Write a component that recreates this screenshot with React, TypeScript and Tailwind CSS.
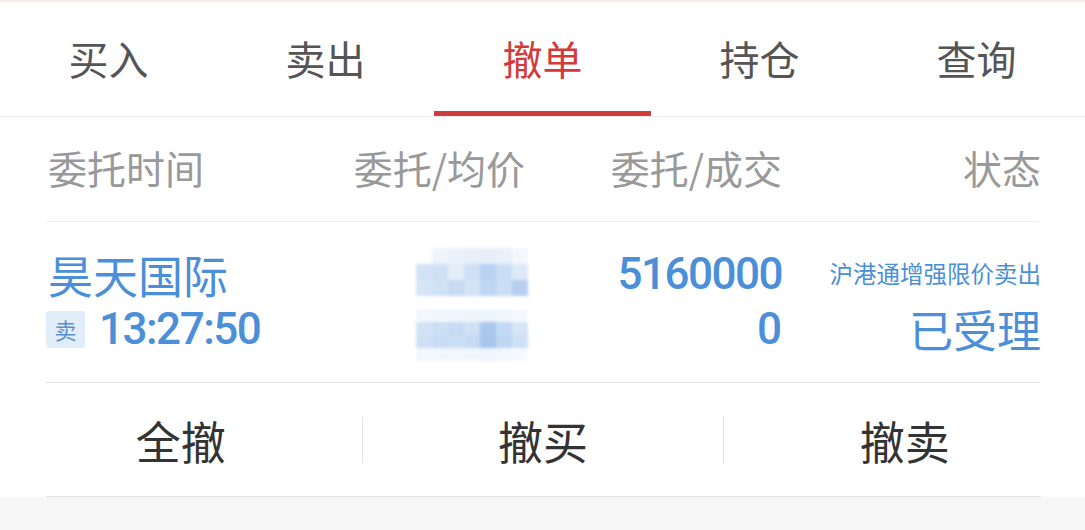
const tabs = ["买入", "卖出", "撤单", "持仓", "查询"];

const blue = "text-[#4a8fd8]";

// mosaic (pixelated price) cells
const mosaicTop = [
  ["#ffffff", "#eef4fb", "#eaf1fa", "#e8f0fa", "#e6eff9", "#e9f1fa", "#f4f8fc"],
  ["#d3e3f6", "#cfe0f5", "#e4eefa", "#cde0f5", "#b9d3f1", "#c9ddf4", "#dde9f8"],
  ["#d6e5f6", "#d0e1f5", "#c7dbf3", "#d2e3f6", "#bed6f2", "#cadef4", "#b7d0ef"],
];
const mosaicBottom = [
  ["#f2f7fc", "#f1f6fc", "#f0f6fc", "#eff5fb", "#eef5fb", "#f0f6fc", "#f5f9fd"],
  ["#d2e3f6", "#cbdff5", "#c7dcf4", "#cfe1f5", "#a9c8ec", "#c3d9f3", "#d5e5f7"],
  ["#cfe0f5", "#c8dcf3", "#cadef4", "#c6dbf3", "#a6c6ec", "#bfd6f2", "#cde0f5"],
  ["#f3f8fd", "#f0f6fc", "#f2f7fc", "#f1f6fc", "#eef5fc", "#f2f7fc", "#f6f9fd"],
];

function Mosaic({ rows, cell }: { rows: string[][]; cell: string }) {
  return (
    <div className="flex flex-col">
      {rows.map((r, i) => (
        <div key={i} className="flex">
          {r.map((c, j) => (
            <div key={j} className={`w-[16px] ${cell}`} style={{ backgroundColor: c }} />
          ))}
        </div>
      ))}
    </div>
  );
}

export default function App() {
  return (
    <div className="w-[1085px] h-[530px] bg-[#f7f7f7] overflow-hidden font-['Noto_Sans_CJK_SC',sans-serif]">
      <div className="bg-white border-t-2 border-[#fbecec]">
        {/* tabs */}
        <nav className="flex h-[115px] border-b border-[#ececec]">
          {tabs.map((t, i) => (
            <div key={t} className="relative flex-1 flex items-center justify-center">
              <span
                className={
                  i === 2
                    ? "text-[40px] leading-none text-[#d13b3b] -mt-[2px]"
                    : "text-[40px] leading-none text-[#555555] -mt-[2px]"
                }
              >
                {t}
              </span>
              {i === 2 && <div className="absolute left-0 right-0 bottom-0 h-[5px] bg-[#d13b3b]" />}
            </div>
          ))}
        </nav>

        {/* header */}
        <div className="mx-[46px] h-[105px] grid grid-cols-[254px_225px_257px_259px] items-center border-b border-[#ececec] text-[39px] leading-none text-[#999999]">
          <div className="pl-[2px] -mt-[3px]">委托时间</div>
          <div className="text-right -mt-[3px]">委托/均价</div>
          <div className="text-right -mt-[3px]">委托/成交</div>
          <div className="text-right -mt-[3px]">状态</div>
        </div>

        {/* order row */}
        <div className="mx-[46px] h-[161px] grid grid-cols-[254px_225px_257px_259px] border-b border-[#e3e3e3] pt-[29px]">
          <div className="flex flex-col gap-[9px]">
            <div className={`h-[46px] flex items-center text-[45px] leading-none pl-[2px] ${blue}`}>昊天国际</div>
            <div className="h-[46px] flex items-center gap-[14px]">
              <span className="w-[39px] h-[37px] rounded-[3px] bg-[#e2edfa] text-[#5b8fd0] text-[22px] leading-none flex items-center justify-center">
                卖
              </span>
              <span className={`font-['Roboto',sans-serif] font-medium text-[44px] tracking-[-1.5px] leading-none ${blue}`}>
                13:27:50
              </span>
            </div>
          </div>
          <div className="flex flex-col items-end -mr-[3px] -mt-[3px] blur-[1.5px]">
            <Mosaic rows={mosaicTop} cell="h-[16px]" />
            <div className="h-[13px]" />
            <Mosaic rows={mosaicBottom} cell="h-[13px]" />
          </div>
          <div className="flex flex-col gap-[9px] items-end font-['Roboto',sans-serif] font-medium">
            <div className={`h-[46px] flex items-center text-[44px] tracking-[-1.5px] leading-none ${blue}`}>5160000</div>
            <div className={`h-[46px] flex items-center text-[44px] leading-none ${blue}`}>0</div>
          </div>
          <div className="flex flex-col gap-[9px] items-end">
            <div className={`h-[46px] flex items-center text-[23.5px] leading-none ${blue}`}>沪港通增强限价卖出</div>
            <div className={`h-[46px] flex items-center text-[44px] leading-none ${blue}`}>已受理</div>
          </div>
        </div>

        {/* actions */}
        <div className="relative grid grid-cols-3 h-[114px] items-center text-[45px] leading-none text-[#333333]">
          <div className="flex justify-center">全撤</div>
          <div className="flex justify-center border-l border-[#e3e3e3] h-[46px] items-center">撤买</div>
          <div className="flex justify-center border-l border-[#e3e3e3] h-[46px] items-center">撤卖</div>
          <div className="absolute left-[46px] right-[44px] bottom-0 h-px bg-[#e3e3e3]" />
        </div>
      </div>
    </div>
  );
}
